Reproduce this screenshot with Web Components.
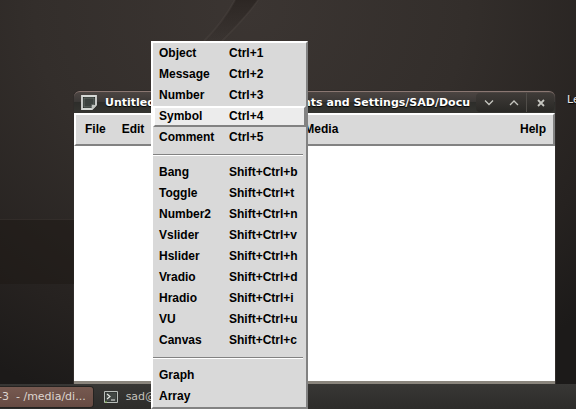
<!DOCTYPE html>
<html lang="en">
<head>
<meta charset="utf-8">
<title>Patch window</title>
<style>
html,body{margin:0;height:100%;overflow:hidden}
</style>
</head>
<body>
<desk-top>
  <span slot="label">Le</span>
  <patch-window>
    <title-bar slot="title"><span slot="name">Untitled</span><span slot="path">nts and Settings/SAD/Docu</span></title-bar>
    <menu-bar slot="menu"></menu-bar>
  </patch-window>
  <task-bar slot="panel"></task-bar>
  <put-menu slot="menu"></put-menu>
</desk-top>
<script>
const define = (name, html, setup) => customElements.define(name, class extends HTMLElement {
  constructor() {
    super();
    this.attachShadow({mode: 'open'}).innerHTML = html;
  }
  connectedCallback() { if (setup) setup(this); }
});

define('desk-top', `<style>
:host{position:relative;display:grid;grid-template-rows:1fr auto;height:100vh;overflow:hidden;box-sizing:border-box;
background:radial-gradient(ellipse 480px 420px at 250px 10px,#3b3532 0%,#332e2b 45%,#262220 80%,#1c1a19 100%)}
.wall{position:absolute;inset:0;width:100%;height:100%}
.area{position:relative;display:grid;grid-template-columns:74px minmax(0,1fr) 21px;padding-top:91px}
.label{padding-left:12px;font:11px/18px "DejaVu Sans",sans-serif;color:#e8e8e8;white-space:nowrap;overflow:hidden;text-shadow:1px 1px 1px #000}
.gap{margin-top:128px;height:64px;background:#1e1915;opacity:.5;border-top:1px solid #3a332f}
</style>
<svg class="wall" viewBox="0 0 576 409" preserveAspectRatio="xMinYMin slice" aria-hidden="true">
<defs><linearGradient id="g" x1="0" y1="0" x2="0" y2="1"><stop offset="0" stop-color="#28221f"/><stop offset="1" stop-color="#28221f" stop-opacity="0"/></linearGradient></defs>
<path d="M235 0h23c-9 13-21 25-35 40h-17c13-15 22-27 29-40z" fill="url(#g)" opacity=".75"/>
<path d="M235 0c-8 15-18 28-31 41M258 0c-10 15-22 27-36 41" fill="none" stroke="#57504a" stroke-width="2" opacity=".25"/>
</svg>
<div class="area"><div class="gap"></div><slot></slot><div class="label"><slot name="label"></slot></div></div>
<slot name="panel"></slot><slot name="menu"></slot>`);

define('patch-window', `<style>
:host{display:flex;flex-direction:column;min-width:0;border-radius:6px 6px 0 0;box-shadow:0 0 0 1px #302c2a}
.canvas{flex:1;background:#fff;border-bottom:3px solid #8a857d}
</style><slot name="title"></slot><slot name="menu"></slot><div class="canvas"></div>`);

define('title-bar', `<style>
:host{display:flex;align-items:center;height:22px;box-sizing:border-box;padding:0 1px 0 7px;border-top:1px solid #8a7772;border-radius:6px 6px 0 0;
background:linear-gradient(#4c4542,#3c3937 45%,#2d2d2a 50%,#353531);color:#fff}
.text{flex:1;display:flex;justify-content:space-between;min-width:0;margin:0 6px 0 8px;overflow:hidden;white-space:nowrap;font:bold 11px/20px "DejaVu Sans",sans-serif;text-shadow:0 1px 1px #000}
svg{display:block;flex:none}
.tools{display:flex;background:linear-gradient(#3f3b38,#292825);border-radius:4px}
button{width:25px;height:19px;padding:0;border:0;background:none;display:grid;place-items:center}
button:last-child{border-left:1px solid #504d49;width:28px}
</style>
<svg width="16" height="15" viewBox="0 0 16 15" aria-hidden="true"><path d="M1 1h14v9l-4 4H1z" fill="#292e2c" stroke="#d5d8d5" stroke-width="1.8"/><path d="M3 3h10v6l-3 3H3z" fill="#3d4340" stroke="#747b77" stroke-width=".7"/><path d="M10 14c1-2 1-3 .5-4.500 2 .7 3 .5 4.500.1-.3 2.400-2 4.200-5 4.400z" fill="#bfc3bf"/></svg>
<div class="text"><slot name="name"></slot><slot name="path"></slot></div>
<div class="tools">
<button aria-label="Minimize"><svg width="10" height="8" viewBox="0 0 10 8"><path d="M1 1.500l4 4 4-4" fill="none" stroke="#c5c5bf" stroke-width="1.300"/></svg></button>
<button aria-label="Maximize"><svg width="10" height="8" viewBox="0 0 10 8"><path d="M1 6l4-4 4 4" fill="none" stroke="#c5c5bf" stroke-width="1.300"/></svg></button>
<button aria-label="Close"><svg width="8" height="8" viewBox="0 0 8 8"><path d="M1 1l6 6M7 1L1 7" fill="none" stroke="#c5c5bf" stroke-width="1.800"/></svg></button>
</div>`);

define('menu-bar', `<style>
:host{display:flex;height:33px;box-sizing:border-box;border:2px solid;border-color:#fff #828282 #828282 #fff;background:#d9d9d9;padding:0 0 0 1px}
button{padding:0 8px;border:0;background:none;font:bold 12px/29px "Liberation Sans",Arial,sans-serif;color:#000;height:29px}
.media{margin-left:144px}
.help{margin-left:auto;padding-right:7px}
</style><button>File</button><button>Edit</button><button class="media">Media</button><button class="help">Help</button>`);

define('task-bar', `<style>
:host{position:relative;display:flex;align-items:center;height:25px;background:linear-gradient(#383735,#2d2c2a);overflow:hidden}
button{display:flex;align-items:center;gap:8px;height:20px;padding:0 7px 0 0;border:0;background:none;font:11px/20px "DejaVu Sans",sans-serif;color:#c4c2bc;white-space:pre}
.active{background:linear-gradient(#765950,#674b43);border-radius:0 3px 3px 0;color:#ddd5cf;box-shadow:0 0 0 1px #252321;margin:0 11px 0 -2px}
</style>
<button class="active">-3  - /media/di...</button>
<button><svg width="14" height="12" viewBox="0 0 14 12" aria-hidden="true"><path d="M.5.5h13v11H.5z" fill="#333735" stroke="#b8bdb9"/><path d="M2 2h10v8H2z" fill="#424744"/><path d="M3 3l3 2.500-3 2.500M7 9h4" fill="none" stroke="#e5e8e5" stroke-width="1.200"/><path d="M1 11h2" stroke="#83b84d"/></svg>sad@</button>`);

define('menu-entry', `<style>
:host{display:block}
button{display:grid;grid-template-columns:70px 1fr;width:100%;height:21px;box-sizing:border-box;padding:0 0 0 4px;border:2px solid transparent;background:none;text-align:left;font:bold 12px/16px "Liberation Sans",Arial,sans-serif;color:#000;white-space:nowrap}
:host([selected]) button{background:#ececec;border-color:#fff #828282 #828282 #fff}
</style><button role="menuitem"><span><slot></slot></span><span class="key"></span></button>`,
el => el.shadowRoot.querySelector('.key').textContent = el.getAttribute('key') || '');

define('put-menu', `<style>
:host{position:absolute;left:151px;top:41px;width:157px;box-sizing:border-box;border:2px solid;border-color:#fff #828282 #828282 #fff;background:#d9d9d9}
hr{margin:6px 3px 6px 0;border:0;height:1px;background:#828282;border-bottom:1px solid #fff}
</style><div role="menu">
<menu-entry key="Ctrl+1">Object</menu-entry><menu-entry key="Ctrl+2">Message</menu-entry><menu-entry key="Ctrl+3">Number</menu-entry><menu-entry key="Ctrl+4" selected>Symbol</menu-entry><menu-entry key="Ctrl+5">Comment</menu-entry>
<hr>
<menu-entry key="Shift+Ctrl+b">Bang</menu-entry><menu-entry key="Shift+Ctrl+t">Toggle</menu-entry><menu-entry key="Shift+Ctrl+n">Number2</menu-entry><menu-entry key="Shift+Ctrl+v">Vslider</menu-entry><menu-entry key="Shift+Ctrl+h">Hslider</menu-entry><menu-entry key="Shift+Ctrl+d">Vradio</menu-entry><menu-entry key="Shift+Ctrl+i">Hradio</menu-entry><menu-entry key="Shift+Ctrl+u">VU</menu-entry><menu-entry key="Shift+Ctrl+c">Canvas</menu-entry>
<hr>
<menu-entry>Graph</menu-entry><menu-entry>Array</menu-entry></div>`);
</script>
</body>
</html>
